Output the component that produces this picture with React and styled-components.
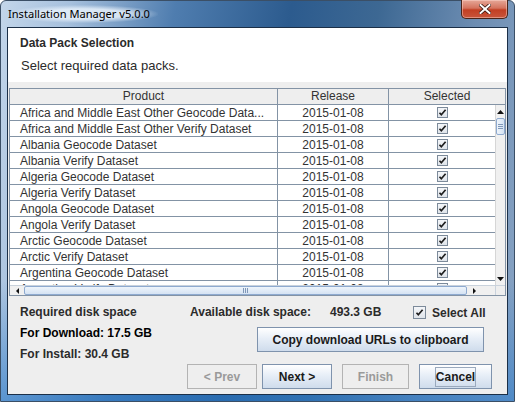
import React from 'react'
import styled, { createGlobalStyle } from 'styled-components'

const GlobalStyle = createGlobalStyle`
  html, body { margin: 0; padding: 0; }
  body {
    width: 515px;
    height: 402px;
    overflow: hidden;
    font-family: "Liberation Sans", Arial, sans-serif;
  }
`

const rows = [
  'Africa and Middle East Other Geocode Data...',
  'Africa and Middle East Other Verify Dataset',
  'Albania Geocode Dataset',
  'Albania Verify Dataset',
  'Algeria Geocode Dataset',
  'Algeria Verify Dataset',
  'Angola Geocode Dataset',
  'Angola Verify Dataset',
  'Arctic Geocode Dataset',
  'Arctic Verify Dataset',
  'Argentina Geocode Dataset',
  'Argentina Verify Dataset',
]

const Window = styled.div`
  width: 515px;
  height: 402px;
  display: flex;
  flex-direction: column;
  box-sizing: border-box;
  border: 1px solid #3b4f66;
  border-radius: 6px 6px 0 0;
  background:
    linear-gradient(180deg, rgba(255,255,255,0) 0%, rgba(255,255,255,0) 70%, rgba(40,120,200,0.6) 100%),
    linear-gradient(100deg, #c3d6ea 0%, #a6c0dd 12%, #4f7daf 30%, #2c5b8e 50%, #3d6893 65%, #6d8db2 82%, #8ba6c6 100%);
`

const TitleBar = styled.div`
  height: 26px;
  display: flex;
  align-items: flex-start;
`

const Title = styled.div`
  margin: 4px 0 0 7px;
  padding: 0 8px 0 0;
  font-family: "Noto Sans", "DejaVu Sans", sans-serif;
  font-size: 11.1px;
  line-height: 18px;
  color: #000;
  background: radial-gradient(ellipse at center, rgba(230,240,250,0.85) 40%, rgba(230,240,250,0) 72%);
`

const CloseButton = styled.div`
  margin: -1px 6px 0 auto;
  width: 47px;
  height: 19px;
  box-sizing: border-box;
  border: 1px solid #4a2418;
  border-top: none;
  border-radius: 0 0 5px 5px;
  background: linear-gradient(180deg, #e6a898 0%, #d4735e 45%, #c23f23 55%, #c8553b 100%);
  box-shadow: inset 0 0 0 1px rgba(255,220,210,0.45);
  display: flex;
  align-items: center;
  justify-content: center;
`

const Client = styled.div`
  flex: 1;
  margin: 0 6px 6px 6px;
  border: 1px solid #1b2f47;
  background: #eeeeee;
  display: flex;
  flex-direction: column;
  min-height: 0;
`

const Banner = styled.div`
  height: 54px;
  background: #ffffff;
  box-sizing: border-box;
  padding: 7px 0 0 12px;
  color: #2b2b2b;
`

const BannerTitle = styled.div`
  font-size: 12px;
  font-weight: bold;
  line-height: 16px;
`

const BannerText = styled.div`
  margin: 7px 0 0 1px;
  font-size: 13px;
  line-height: 16px;
`

const ScrollPane = styled.div`
  margin: 6px 1px 0 1px;
  height: 208px;
  box-sizing: border-box;
  border: 1px solid #8393a5;
  background: #fff;
  display: grid;
  grid-template-columns: 1fr 10px;
  grid-template-rows: 16px 1fr 10px;
`

const HeaderRow = styled.div`
  grid-column: 1 / 3;
  display: grid;
  grid-template-columns: 268px 111px 1fr;
  background: #eeeeee;
  border-bottom: 1px solid #8393a5;
  box-sizing: border-box;
`

const HeaderCell = styled.div`
  font-size: 12px;
  line-height: 15px;
  color: #333;
  text-align: center;
  border-right: ${p => (p.$last ? 'none' : '1px solid #8393a5')};
`

const Viewport = styled.div`
  overflow: hidden;
  background: #fff;
`

const Row = styled.div`
  display: grid;
  grid-template-columns: 268px 111px 1fr;
  height: 16px;
  box-sizing: border-box;
  border-bottom: 1px solid #8393a5;
`

const Cell = styled.div`
  font-size: 12px;
  line-height: 16px;
  color: #333;
  white-space: nowrap;
  overflow: hidden;
  padding-left: ${p => (p.$align === 'left' ? '10px' : '0')};
  text-align: ${p => p.$align || 'center'};
  border-right: ${p => (p.$last ? 'none' : '1px solid #8393a5')};
  display: ${p => (p.$check ? 'flex' : 'block')};
  align-items: center;
  justify-content: center;
`

const Box = styled.div`
  width: ${p => p.$size || 11}px;
  height: ${p => p.$size || 11}px;
  box-sizing: border-box;
  border: 1px solid #7c8a9a;
  background: linear-gradient(180deg, #f4f6f9 0%, #dfe4ea 100%);
  display: flex;
  align-items: center;
  justify-content: center;
`

const VScroll = styled.div`
  display: flex;
  flex-direction: column;
  background: #f0f0f0;
  border-left: 1px solid #d6d6d6;
`

const HScroll = styled.div`
  display: flex;
  background: #f0f0f0;
  border-top: 1px solid #c9d2dc;
`

const Arrow = styled.div`
  flex: none;
  width: ${p => (p.$h ? '14px' : 'auto')};
  height: ${p => (p.$h ? 'auto' : '13px')};
  display: flex;
  align-items: center;
  justify-content: center;
  background: #f0f0f0;
`

const Track = styled.div`
  flex: 1;
  display: flex;
  flex-direction: ${p => (p.$h ? 'row' : 'column')};
`

const Thumb = styled.div`
  flex: ${p => (p.$h ? '1' : 'none')};
  height: ${p => (p.$h ? 'auto' : '17px')};
  box-sizing: border-box;
  border: 1px solid #8eaad0;
  border-radius: 2px;
  background: linear-gradient(${p => (p.$h ? '180deg' : '90deg')}, #eef4fb 0%, #d5e3f3 100%);
  display: flex;
  align-items: center;
  justify-content: center;
`

const Corner = styled.div`
  background: #eeeeee;
  border-left: 1px solid #c9d2dc;
  border-top: 1px solid #c9d2dc;
`

const BottomPanel = styled.div`
  flex: 1;
  display: flex;
  flex-direction: column;
  padding: 6px 15px 5px 12px;
`

const Info = styled.div`
  height: 60px;
  display: flex;
`

const LeftCol = styled.div`
  width: 170px;
  display: flex;
  flex-direction: column;
`

const Label = styled.div`
  font-size: 12px;
  font-weight: bold;
  line-height: 21px;
  color: ${p => (p.$strong ? '#000' : '#2b2b2b')};
  white-space: nowrap;
`

const RightCol = styled.div`
  flex: 1;
  display: flex;
  flex-direction: column;
`

const DiskRow = styled.div`
  display: flex;
  align-items: center;
  height: 21px;
`

const DiskValue = styled(Label)`
  width: ${p => p.$w}px;
`

const SelectAll = styled.div`
  display: flex;
  align-items: center;
  gap: 6px;
  font-size: 12px;
  font-weight: bold;
  color: #2b2b2b;
`

const Button = styled.div`
  width: ${p => p.$w}px;
  height: 25px;
  box-sizing: border-box;
  margin-left: ${p => p.$ml || 0}px;
  margin-top: ${p => p.$mt || 0}px;
  border: 1px solid ${p => (p.$disabled ? '#b3b3b3' : '#7f93ad')};
  background: ${p =>
    p.$disabled ? '#eeeeee' : 'linear-gradient(180deg, #ffffff 0%, #e7eef7 45%, #cfdcec 100%)'};
  color: ${p => (p.$disabled ? '#9a9a9a' : '#1a1a1a')};
  font-size: 12px;
  font-weight: bold;
  display: flex;
  align-items: center;
  justify-content: center;
  white-space: nowrap;
`

const Focus = styled.span`
  border: 1px solid #9aa9bd;
  padding: 2px 0;
  line-height: 14px;
`

const Footer = styled.div`
  display: flex;
  justify-content: flex-end;
  margin-top: 2px;
`

function Check() {
  return (
    <svg width="9" height="9" viewBox="0 0 9 9">
      <path d="M1.5 4.8 L3.3 6.8 L7.6 1.8" fill="none" stroke="#1e1e1e" strokeWidth="1.7" />
    </svg>
  )
}

function Tri({ dir }) {
  const d = {
    up: 'M0 4 L3.5 0 L7 4 Z',
    down: 'M0 0 L7 0 L3.5 4 Z',
    left: 'M3 0 L3 6 L0 3 Z',
    right: 'M0 0 L0 6 L3 3 Z',
  }[dir]
  const w = dir === 'up' || dir === 'down' ? 7 : 3
  const h = dir === 'up' || dir === 'down' ? 4 : 6
  return (
    <svg width={w} height={h} viewBox={`0 0 ${w} ${h}`}>
      <path d={d} fill="#111" />
    </svg>
  )
}

export default function App() {
  return (
    <>
      <GlobalStyle />
      <Window>
        <TitleBar>
          <Title>Installation Manager v5.0.0</Title>
          <CloseButton>
            <svg width="12" height="10" viewBox="0 0 12 10">
              <path d="M1.5 1 L10.5 9 M10.5 1 L1.5 9" stroke="#3a1a12" strokeWidth="3.6" strokeLinecap="square" />
              <path d="M1.5 1 L10.5 9 M10.5 1 L1.5 9" stroke="#ffffff" strokeWidth="2" strokeLinecap="square" />
            </svg>
          </CloseButton>
        </TitleBar>
        <Client>
          <Banner>
            <BannerTitle>Data Pack Selection</BannerTitle>
            <BannerText>Select required data packs.</BannerText>
          </Banner>
          <ScrollPane>
            <HeaderRow>
              <HeaderCell>Product</HeaderCell>
              <HeaderCell>Release</HeaderCell>
              <HeaderCell $last>Selected</HeaderCell>
            </HeaderRow>
            <Viewport>
              {rows.map(name => (
                <Row key={name}>
                  <Cell $align="left">{name}</Cell>
                  <Cell>2015-01-08</Cell>
                  <Cell $check $last>
                    <Box><Check /></Box>
                  </Cell>
                </Row>
              ))}
            </Viewport>
            <VScroll>
              <Arrow><Tri dir="up" /></Arrow>
              <Track>
                <Thumb>
                  <svg width="5" height="5" viewBox="0 0 5 5">
                    <path d="M0 0.5 H5 M0 2.5 H5 M0 4.5 H5" stroke="#7f97b8" strokeWidth="1" />
                  </svg>
                </Thumb>
              </Track>
              <Arrow><Tri dir="down" /></Arrow>
            </VScroll>
            <HScroll>
              <Arrow $h><Tri dir="left" /></Arrow>
              <Track $h>
                <Thumb $h>
                  <svg width="5" height="5" viewBox="0 0 5 5">
                    <path d="M0.5 0 V5 M2.5 0 V5 M4.5 0 V5" stroke="#7f97b8" strokeWidth="1" />
                  </svg>
                </Thumb>
              </Track>
              <Arrow $h><Tri dir="right" /></Arrow>
              <Arrow $h />
            </HScroll>
            <Corner />
          </ScrollPane>
          <BottomPanel>
            <Info>
              <LeftCol>
                <Label>Required disk space</Label>
                <Label $strong>For Download: 17.5 GB</Label>
                <Label>For Install: 30.4 GB</Label>
              </LeftCol>
              <RightCol>
                <DiskRow>
                  <DiskValue $w={140}>Available disk space:</DiskValue>
                  <DiskValue $w={83}>493.3 GB</DiskValue>
                  <SelectAll>
                    <Box $size={13}><Check /></Box>
                    Select All
                  </SelectAll>
                </DiskRow>
                <Button $w={227} $ml={67} $mt={4}>Copy download URLs to clipboard</Button>
              </RightCol>
            </Info>
            <Footer>
              <Button $w={70} $disabled>&lt; Prev</Button>
              <Button $w={70} $ml={5}>Next &gt;</Button>
              <Button $w={67} $ml={10} $disabled>Finish</Button>
              <Button $w={73} $ml={10}><Focus>Cancel</Focus></Button>
            </Footer>
          </BottomPanel>
        </Client>
      </Window>
    </>
  )
}
